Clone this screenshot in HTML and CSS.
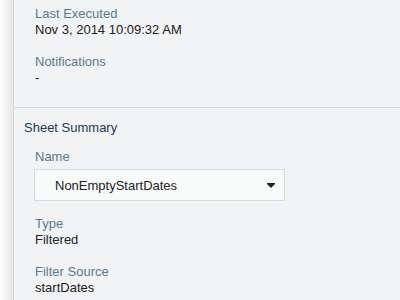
FILE: index.html
```html
<html><head>
    <meta charset="UTF-8">
    <title>Sheet Details</title>
    <link rel="stylesheet" href="styles.css">
</head>

<body>
    <div class="page">
        <div class="edge"></div>
        <div class="panel">
            <div class="section top-section">
                <div class="field">
                    <div class="field-label">Last Executed</div>
                    <div class="field-value">Nov 3, 2014 10:09:32 AM</div>
                </div>
                <div class="field">
                    <div class="field-label">Notifications</div>
                    <div class="field-value">-</div>
                </div>
            </div>
            <div class="section summary-section">
                <div class="section-title">Sheet Summary</div>
                <div class="field name-field">
                    <div class="field-label">Name</div>
                    <div class="select-box">
                        <span>NonEmptyStartDates</span>
                        <svg class="caret" width="8" height="5" viewBox="0 0 8 5">
                            <path d="M0 0 H8 V1 L4 5 L0 1 Z" fill="#222"/>
                        </svg>
                    </div>
                </div>
                <div class="field">
                    <div class="field-label">Type</div>
                    <div class="field-value">Filtered</div>
                </div>
                <div class="field">
                    <div class="field-label">Filter Source</div>
                    <div class="field-value">startDates</div>
                </div>
            </div>
        </div>
    </div>
</body></html>
```

FILE: styles.css
```css
body {
    margin: 0;
    padding: 0;
    font-family: "Liberation Sans", Arial, sans-serif;
    font-size: 13px;
    background-color: #f2f3f5;
}

.page {
    display: flex;
    height: 300px;
    overflow: hidden;
}

.edge {
    width: 13px;
    flex-shrink: 0;
    background: linear-gradient(to right, #ffffff, #e4e5e7);
    border-right: 1px solid #d4d6d9;
}

.panel {
    flex: 1;
    background-color: #f2f3f5;
}

.section {
    padding-left: 21px;
}

.top-section {
    padding-top: 6px;
    padding-bottom: 5px;
    border-bottom: 1px solid #d8dbde;
}

.summary-section {
    padding-left: 10px;
    padding-top: 12px;
}

.section-title {
    color: #1f3a52;
    line-height: 16px;
    margin-bottom: 13px;
}

.summary-section .field {
    padding-left: 11px;
}

.field {
    margin-bottom: 16px;
}

.summary-section .name-field {
    margin-bottom: 15px;
}

.field-label {
    color: #5b7a90;
    line-height: 16px;
}

.field-value {
    color: #222;
    line-height: 16px;
}

.select-box {
    display: flex;
    align-items: center;
    justify-content: space-between;
    width: 251px;
    height: 32px;
    margin-top: 4px;
    margin-left: -1px;
    padding: 0 9px 0 20px;
    box-sizing: border-box;
    background-color: #f9fbfb;
    border: 1px solid #d3dde3;
    color: #222;
}

.caret {
    display: block;
}
```
